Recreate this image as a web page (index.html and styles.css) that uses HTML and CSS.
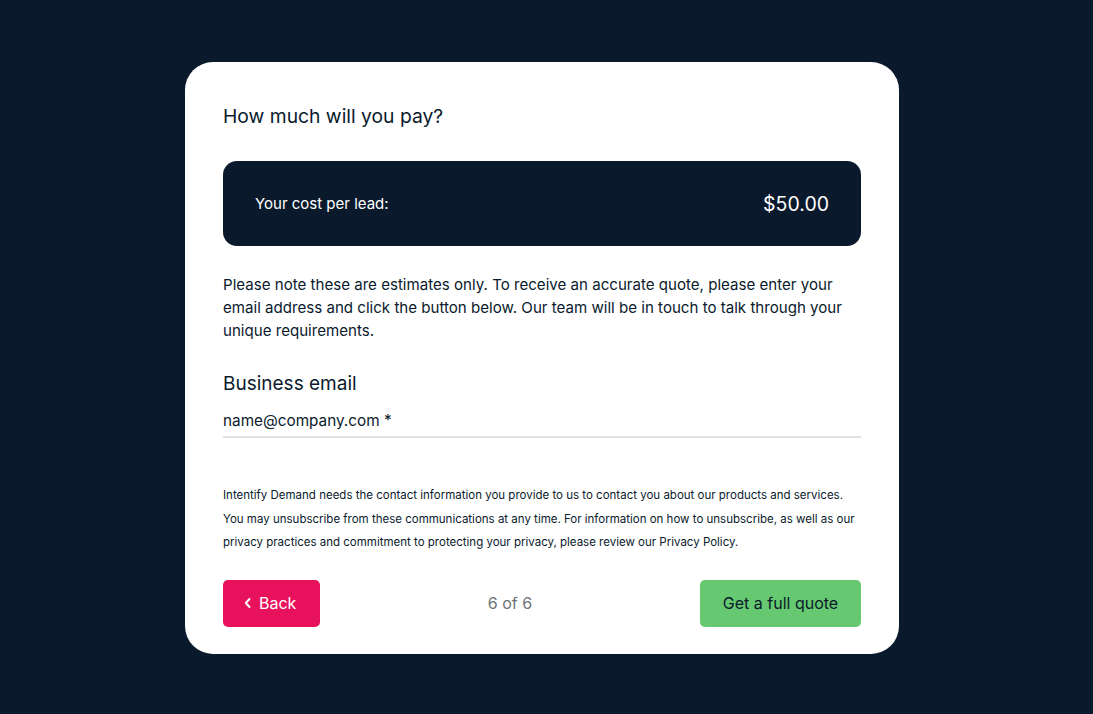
FILE: index.html
```html
<!DOCTYPE html>
<html lang="en">
<head>
  <meta charset="UTF-8" />
  <meta name="viewport" content="width=device-width, initial-scale=1.0" />
  <title>How much will you pay?</title>
  <link rel="stylesheet" href="styles.css">
</head>
<body>

  <div class="page">
    <div class="card">
      <h2 class="title">How much will you pay?</h2>

      <div class="costBox">
        <span class="costLabel">Your cost per lead:</span>
        <span class="costValue">$50.00</span>
      </div>

      <p class="note">Please note these are estimates only. To receive an accurate quote, please enter your email address and click the button below. Our team will be in touch to talk through your unique requirements.</p>

      <label class="fieldLabel" for="bizEmail">Business email</label>
      <input class="emailInput" type="email" id="bizEmail" placeholder="name@company.com *">

      <p class="legal">Intentify Demand needs the contact information you provide to us to contact you about our products and services. You may unsubscribe from these communications at any time. For information on how to unsubscribe, as well as our privacy practices and commitment to protecting your privacy, please review our Privacy Policy.</p>

      <div class="actions">
        <button class="btn btnBack" type="button">
          <svg width="10" height="12" viewBox="0 0 10 12" aria-hidden="true"><path d="M6.5 2 L2.8 6 L6.5 10" fill="none" stroke="#fff" stroke-width="2" stroke-linecap="round" stroke-linejoin="round"/></svg>
          Back
        </button>
        <span class="step">6 of 6</span>
        <button class="btn btnQuote" type="button">Get a full quote</button>
      </div>
    </div>
  </div>

</body>
</html>
```

FILE: styles.css
```css
body {
  font-family: Inter, "Open Sans", Arial, sans-serif;
  background-color: #0a1a2c;
  color: #0a1a2c;
  margin: 0;
}

.page {
  padding: 62px 0 0 185px;
  min-height: 652px;
}

.card {
  width: 638px;
  background-color: #fff;
  border-radius: 28px;
  padding: 40px 38px 27px;
}

.title {
  font-size: 19.3px;
  font-weight: 400;
  line-height: 28px;
  margin: 0 0 31px;
}

.costBox {
  display: flex;
  justify-content: space-between;
  align-items: center;
  height: 85px;
  padding: 0 32px;
  background-color: #0a1a2c;
  border-radius: 14px;
  color: #fff;
}

.costLabel {
  font-size: 15px;
}

.costValue {
  font-size: 19.5px;
}

.note {
  font-size: 15.1px;
  line-height: 23px;
  margin: 27px 0 29px;
}

.fieldLabel {
  display: block;
  font-size: 19px;
  line-height: 26px;
}

.emailInput {
  display: block;
  width: 100%;
  box-sizing: border-box;
  margin-top: 12px;
  padding: 0 0 3px;
  border: none;
  border-bottom: 2px solid #dfe3e8;
  font-family: inherit;
  font-size: 15.3px;
  line-height: 24px;
  color: #0a1a2c;
  outline: none;
}

.emailInput::placeholder {
  color: #0a1a2c;
}

.legal {
  font-size: 11.5px;
  line-height: 23.5px;
  margin: 46px 0 25px;
}

.actions {
  display: flex;
  justify-content: space-between;
  align-items: center;
}

.btn {
  height: 47px;
  border: none;
  border-radius: 5px;
  font-family: inherit;
  font-size: 16px;
  cursor: pointer;
}

.btnBack {
  display: flex;
  align-items: center;
  gap: 6px;
  width: 97px;
  padding: 0 0 0 20px;
  background-color: #e8125c;
  color: #fff;
}

.btnQuote {
  width: 161px;
  background-color: #66c870;
  color: #0a1a2c;
}

.step {
  font-size: 16px;
  color: #6e7277;
}
```
